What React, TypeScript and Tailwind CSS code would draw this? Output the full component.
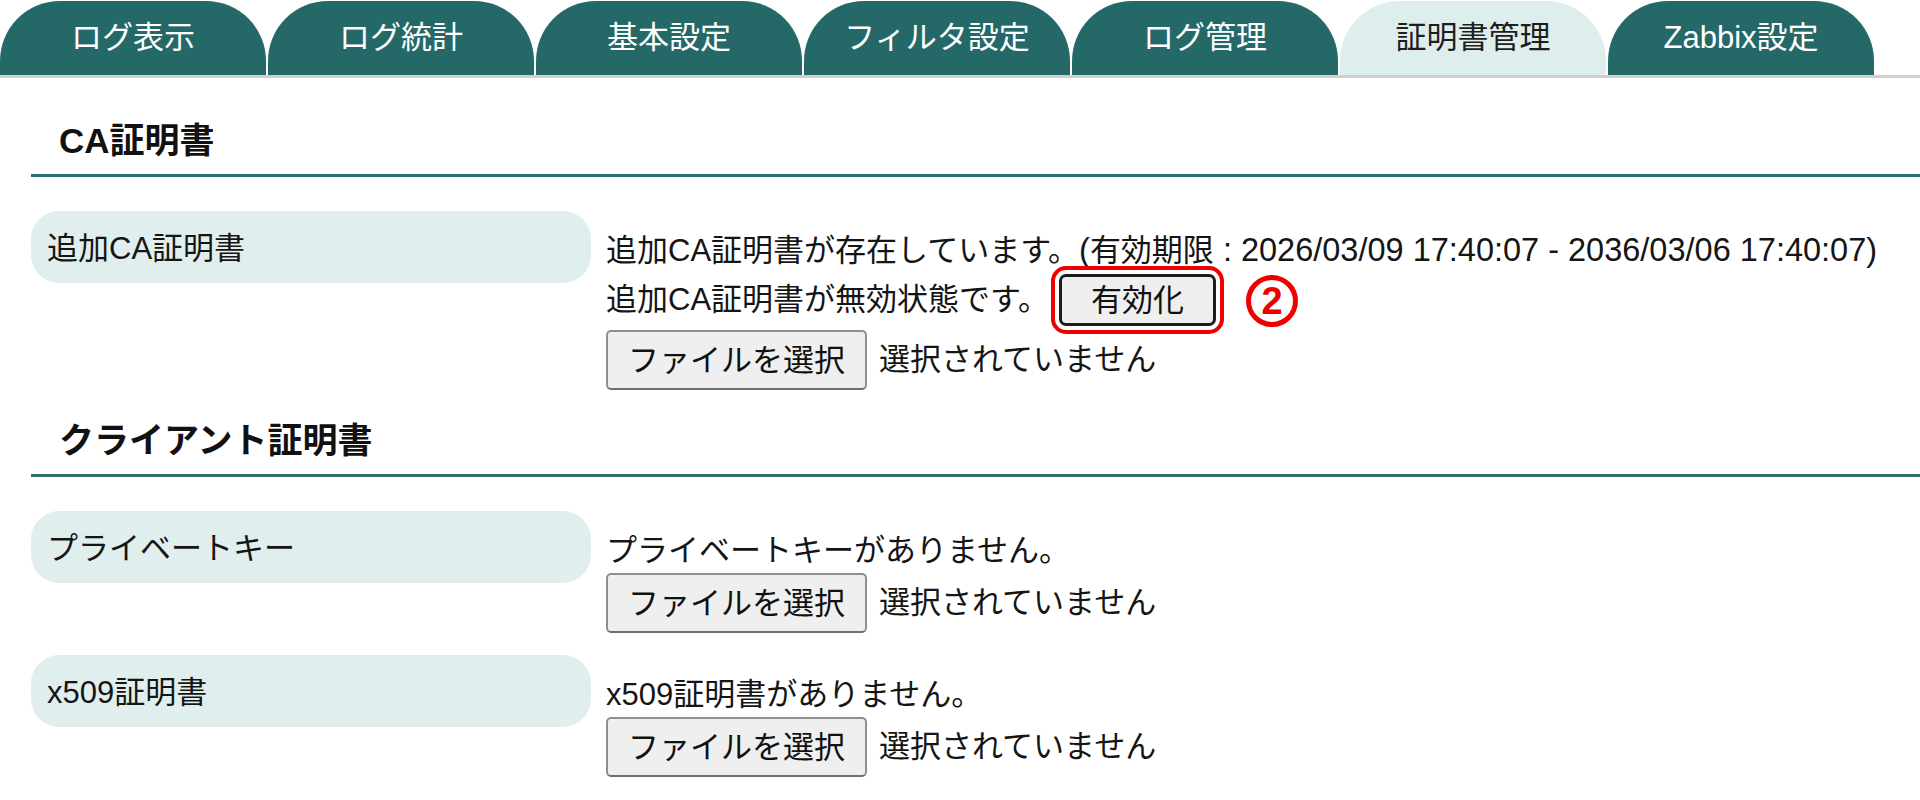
import React from 'react';

const tabs = ['ログ表示', 'ログ統計', '基本設定', 'フィルタ設定', 'ログ管理', '証明書管理', 'Zabbix設定'];
const activeTab = 5;

const FilePicker = () => (
  <div className="flex items-center gap-[12px]">
    <button className="h-[60px] px-[20px] bg-[#efefef] border-2 border-[#8f8f8f] border-b-[#6f6f6f] rounded-[5px] text-[31px] leading-none text-[#111]">
      ファイルを選択
    </button>
    <span className="whitespace-nowrap">選択されていません</span>
  </div>
);

const Row = ({ label, children, className = '' }: { label: string; children: React.ReactNode; className?: string }) => (
  <div className={`flex items-start gap-[15px] ml-[31px] ${className}`}>
    <div className="w-[560px] h-[72px] shrink-0 rounded-[28px] bg-[#e0eeed] flex items-center pl-[16px] pt-[4px]">
      {label}
    </div>
    <div className="flex flex-col pt-[17px]">{children}</div>
  </div>
);

const Heading = ({ title, className = '' }: { title: string; className?: string }) => (
  <div className={`ml-[31px] px-[28px] pb-[13px] border-b-[3px] border-[#2d6e6e] ${className}`}>
    <h2 className="text-[35px] leading-[40px] font-bold text-[#111]">{title}</h2>
  </div>
);

export default function App() {
  return (
    <div className="w-[1920px] h-[800px] overflow-hidden bg-white text-[31px] text-[#151515] font-['Liberation_Sans','Noto_Sans_CJK_JP',sans-serif]">
      {/* Tabs */}
      <div className="flex gap-[2px] pt-[1px] border-b-[3px] border-[#cfcfcf]">
        {tabs.map((tab, index) => (
          <div
            key={tab}
            className={`w-[266px] h-[74px] rounded-t-[60px] flex items-center justify-center pt-[1px] ${
              index === activeTab ? 'bg-[#deeeed] text-[#1e1e1e]' : 'bg-[#246968] text-white'
            }`}
          >
            {tab}
          </div>
        ))}
      </div>

      {/* CA certificate */}
      <Heading title="CA証明書" className="mt-[43px]" />
      <Row label="追加CA証明書" className="mt-[34px]">
        <div className="leading-[45px] h-[45px] whitespace-nowrap">
          追加CA証明書が存在しています。<span className="text-[32.5px]">(</span>有効期限
          <span className="text-[32.5px]"> : 2026/03/09 17:40:07 - 2036/03/06 17:40:07)</span>
        </div>
        <div className="flex items-center h-[54px] whitespace-nowrap">
          <span>追加CA証明書が無効状態です。</span>
          <button className="ml-[10px] h-[52px] px-[29px] bg-[#efefef] border-[3px] border-[#1d1d1d] rounded-[7px] leading-none text-[#111] outline-[4px] outline-solid outline-[#ee0000] outline-offset-[4px]">
            有効化
          </button>
          <span className="ml-[30px] mt-[2px] w-[52px] h-[52px] rounded-full border-[5px] border-[#ee0000] flex items-center justify-center text-[#ee0000] text-[38px] font-bold leading-none">
            2
          </span>
        </div>
        <div className="mt-[3px]">
          <FilePicker />
        </div>
      </Row>

      {/* Client certificate */}
      <Heading title="クライアント証明書" className="mt-[31px]" />
      <Row label="プライベートキー" className="mt-[34px]">
        <div className="leading-[45px] h-[45px] whitespace-nowrap">プライベートキーがありません。</div>
        <FilePicker />
      </Row>
      <Row label="x509証明書" className="mt-[22px]">
        <div className="leading-[45px] h-[45px] whitespace-nowrap">x509証明書がありません。</div>
        <FilePicker />
      </Row>
    </div>
  );
}
